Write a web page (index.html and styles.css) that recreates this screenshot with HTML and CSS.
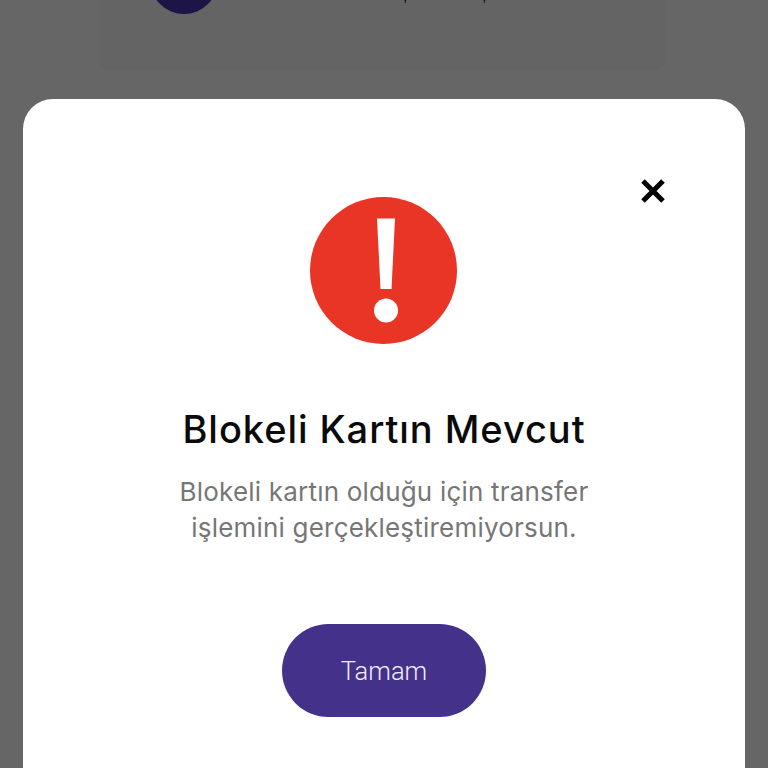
FILE: index.html
```html
<!DOCTYPE html>
<html lang="tr">
<head>
<meta charset="utf-8">
<title>Blokeli Kartın Mevcut</title>
<link rel="stylesheet" href="styles.css">
</head>
<body>
<div class="behind">
  <div class="avatar"></div>
  <div class="behind-text">, ,</div>
</div>
<main class="sheet">
  <button class="close" aria-label="Kapat">
    <svg viewBox="0 0 26 26" width="26" height="26"><path d="M3 3L23 23M23 3L3 23" fill="none" stroke="#000" stroke-width="5"/></svg>
  </button>
  <svg class="alert" viewBox="0 0 147 147" width="147" height="147">
    <circle cx="73.5" cy="73.5" r="73.5" fill="#e93526"/>
    <path d="M67 21.5H85L81.5 92H70.5Z" fill="#fff"/>
    <circle cx="76" cy="113.500" r="12" fill="#fff"/>
  </svg>
  <h1 class="title">Blokeli Kartın Mevcut</h1>
  <p class="message">Blokeli kartın olduğu için transfer<br>işlemini gerçekleştiremiyorsun.</p>
  <button class="primary">Tamam</button>
</main>
</body>
</html>
```
FILE: styles.css
```css
html, body {
  margin: 0;
  height: 768px;
  overflow: hidden;
  background: #666666;
}
body {
  font-family: "Inter", "Noto Sans", sans-serif;
}
.behind {
  height: 70px;
  margin: 0 103px 0 100px;
  background: #646464;
  border-radius: 0 0 10px 10px;
  display: flex;
  justify-content: flex-start;
  position: relative;
}
.avatar {
  width: 68px;
  height: 68px;
  margin: -54px 0 0 50px;
  border-radius: 50%;
  background: #1d1546;
}
.behind-text {
  font: 16px/16px "Liberation Sans", sans-serif;
  color: #111;
  margin: -12px 0 0 185px;
  word-spacing: 70px;
}
.sheet {
  position: relative;
  margin: 29px 23px 0;
  height: 669px;
  background: #fff;
  border-radius: 30px 30px 0 0;
  display: flex;
  flex-direction: column;
  align-items: center;
  padding-top: 98px;
  box-sizing: border-box;
}
.close {
  position: absolute;
  top: 79px;
  right: 79px;
  padding: 0;
  border: 0;
  background: none;
  line-height: 0;
}
.alert {
  display: block;
  margin-right: 1px;
}
.title {
  margin: 62px 0 0;
  font-size: 38px;
  line-height: 46px;
  font-weight: 500;
  letter-spacing: 0.95px;
  color: #0a0a0a;
  white-space: nowrap;
}
.message {
  margin: 22px 0 0;
  font-size: 26px;
  line-height: 36px;
  letter-spacing: 0.2px;
  color: #767676;
  text-align: center;
  white-space: nowrap;
}
.primary {
  margin-top: 78px;
  width: 204px;
  height: 93px;
  padding: 1px 0 0;
  border: 0;
  border-radius: 47px;
  background: #43318a;
  color: #f1eefa;
  font-family: "Roboto", sans-serif;
  font-weight: 300;
  font-size: 25.5px;
}
```
